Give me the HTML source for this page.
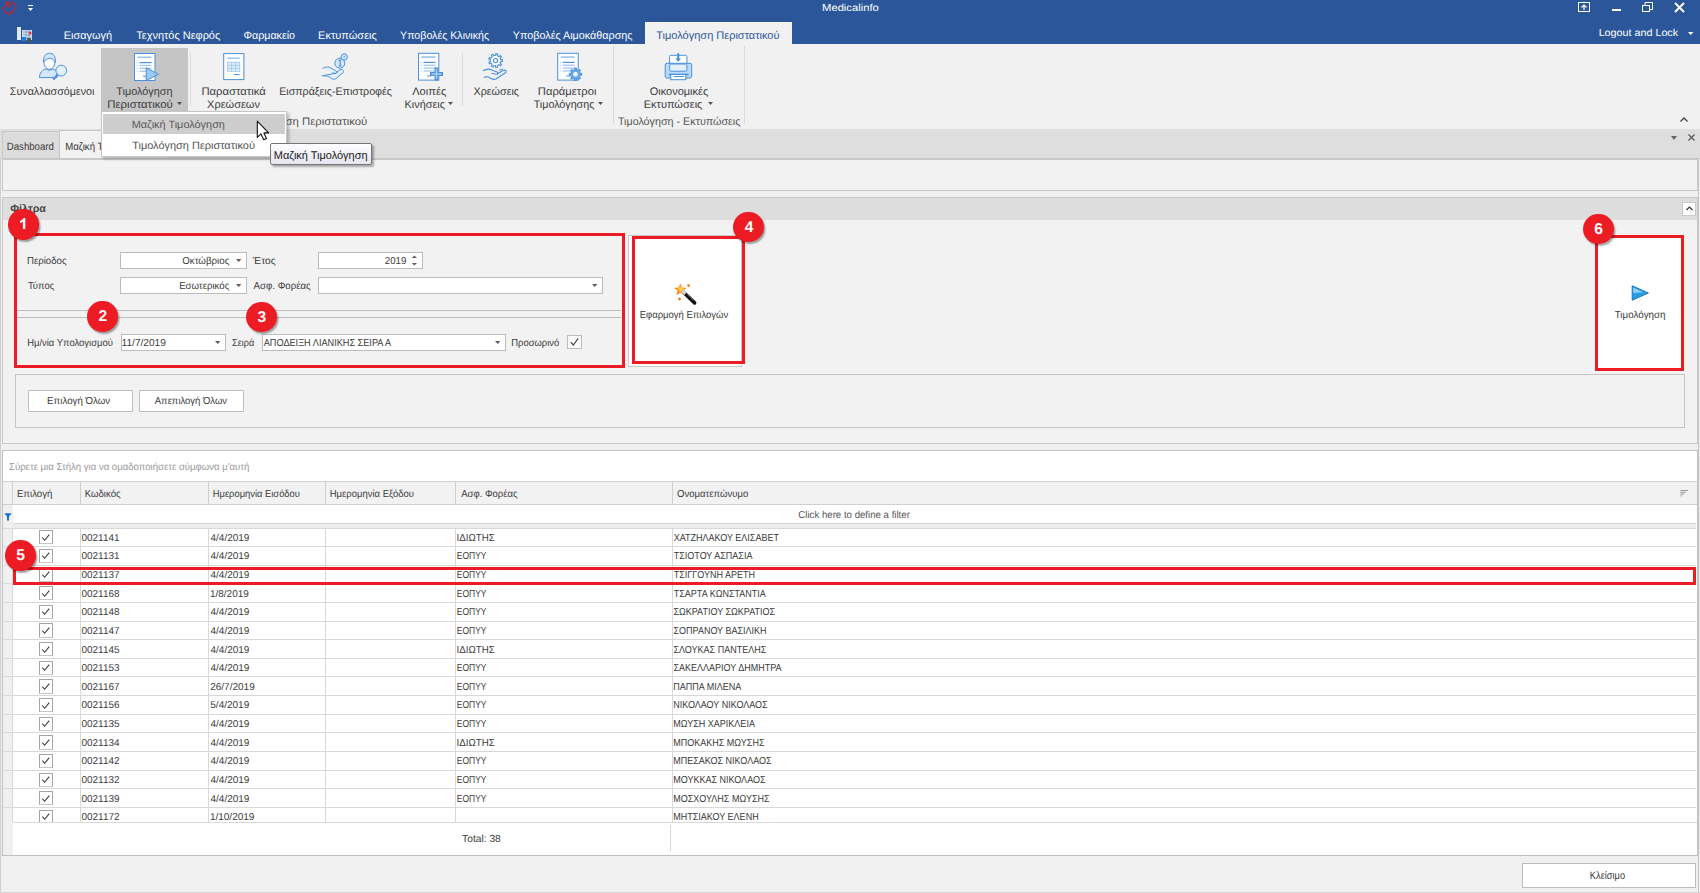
<!DOCTYPE html>
<html><head><meta charset="utf-8"><style>
html,body{margin:0;padding:0;width:1700px;height:893px;overflow:hidden;background:#f0f0f0}
body{position:relative;font-family:"Liberation Sans",sans-serif}
.t{position:absolute;white-space:nowrap}
.s{position:absolute;left:0;top:0;overflow:visible;font-family:"Liberation Sans",sans-serif;text-rendering:geometricPrecision;white-space:pre}
.r{position:absolute}
.badge{position:absolute;border-radius:50%;background:#ed1c24;color:#fff;font-weight:bold;text-align:center;box-shadow:1.5px 2px 1.5px rgba(0,0,0,0.35);font-family:"Liberation Sans",sans-serif}
</style></head><body>
<div class="r" style="left:0px;top:0px;width:1700px;height:44px;background:#2b579a"></div>
<svg class="s" width="1" height="1"><path d="M8.6 6.2 C6.5 5.2 3.6 5.8 3.4 8.2 C3.3 10.6 6.2 12.8 9.6 14.6 C12.8 11.8 15.4 8.6 15.8 5.6 C16.1 3.2 13.8 2.2 11.8 3.4 C10.4 4.4 9.4 6.2 9 7.6" fill="none" stroke="#c8242b" stroke-width="1.1"/><ellipse cx="7.6" cy="3.1" rx="1.9" ry="2.1" fill="#c8242b"/><circle cx="11.3" cy="12" r="1.1" fill="#c8242b"/></svg>
<svg class="r" style="left:27px;top:4px" width="8" height="8" viewBox="0 0 8 8"><rect x="1" y="1" width="5" height="1" fill="#fff"/><path d="M1 4 L6 4 L3.5 7Z" fill="#fff"/></svg>
<svg class="s" width="1" height="1"><text transform="translate(822.10,11.10) scale(1.1054,1)" font-size="10.145" fill="#fff">Medicalinfo</text></svg>
<svg class="r" style="left:1578px;top:2px" width="13" height="11" viewBox="0 0 13 11"><rect x="0.5" y="0.5" width="11" height="9" fill="none" stroke="#fff" stroke-width="1"/><path d="M6 8 L6 3 M3.5 5.5 L6 3 L8.5 5.5" stroke="#fff" stroke-width="1.2" fill="none"/></svg>
<div class="r" style="left:1612px;top:9px;width:9px;height:2px;background:#fff"></div>
<svg class="r" style="left:1642px;top:2px" width="11" height="11" viewBox="0 0 11 11"><rect x="0.5" y="3.5" width="7" height="6" fill="none" stroke="#fff"/><path d="M3 3.5 V0.5 H10.5 V7.5 H7.5" fill="none" stroke="#fff"/></svg>
<svg class="r" style="left:1674px;top:2px" width="11" height="11" viewBox="0 0 11 11"><path d="M1 1 L10 10 M10 1 L1 10" stroke="#fff" stroke-width="1.9"/></svg>
<div class="r" style="left:644.5px;top:22px;width:147.3px;height:22px;background:#f1f1f1"></div>
<svg class="r" style="left:16px;top:26px" width="17" height="17" viewBox="0 0 17 17"><rect x="1" y="1" width="4" height="13" fill="#dfe8f5"/><rect x="6" y="4" width="10" height="10" fill="#cfdcef"/><path d="M7 6h8M7 9h8M7 12h8M10 4v10M13 4v10" stroke="#7f9bc8" stroke-width="0.8"/><rect x="6" y="11" width="4" height="4" fill="#1e7fd8"/><rect x="11" y="12" width="4" height="4" fill="#555"/><circle cx="14" cy="7" r="1.5" fill="#e33"/></svg>
<svg class="s" width="1" height="1"><text transform="translate(63.83,38.80) scale(0.9906,1)" font-size="11.014" fill="#fff">Εισαγωγή</text></svg>
<svg class="s" width="1" height="1"><text transform="translate(136.28,38.80) scale(0.9962,1)" font-size="11.014" fill="#fff">Τεχνητός Νεφρός</text></svg>
<svg class="s" width="1" height="1"><text transform="translate(243.46,38.80) scale(0.9712,1)" font-size="11.014" fill="#fff">Φαρμακείο</text></svg>
<svg class="s" width="1" height="1"><text transform="translate(318.12,38.80)" font-size="11.014" fill="#fff">Εκτυπώσεις</text></svg>
<svg class="s" width="1" height="1"><text transform="translate(400.09,38.80) scale(0.9669,1)" font-size="11.014" fill="#fff">Υποβολές Κλινικής</text></svg>
<svg class="s" width="1" height="1"><text transform="translate(512.78,38.80) scale(0.9801,1)" font-size="11.014" fill="#fff">Υποβολές Αιμοκάθαρσης</text></svg>
<svg class="s" width="1" height="1"><text transform="translate(656.28,38.80)" font-size="11.014" fill="#2b579a">Τιμολόγηση Περιστατικού</text></svg>
<svg class="s" width="1" height="1"><text transform="translate(1598.64,36.20) scale(1.0612,1)" font-size="10.145" fill="#fff">Logout and Lock</text></svg>
<svg class="r" style="left:1687.5px;top:32px" width="6" height="4" viewBox="0 0 6 4"><path d="M0 0 H5.5 L2.75 3Z" fill="#fff"/></svg>
<div class="r" style="left:0px;top:44px;width:1700px;height:85px;background:#f1f1f1"></div>
<div class="r" style="left:101px;top:48px;width:86.6px;height:63px;background:#c5c5c5"></div>
<div class="r" style="left:190px;top:52.5px;width:1px;height:53px;background:#dadada"></div>
<div class="r" style="left:462px;top:52.5px;width:1px;height:53px;background:#dadada"></div>
<div class="r" style="left:613px;top:46px;width:1px;height:77.5px;background:#dadada"></div>
<div class="r" style="left:744px;top:46px;width:1px;height:77.5px;background:#dadada"></div>
<svg class="s" width="1" height="1"><text transform="translate(9.81,94.50) scale(0.9736,1)" font-size="11.014" fill="#3b3b3b">Συναλλασσόμενοι</text></svg>
<svg class="s" width="1" height="1"><text transform="translate(116.28,94.50) scale(0.9864,1)" font-size="11.014" fill="#3b3b3b">Τιμολόγηση</text></svg>
<svg class="s" width="1" height="1"><text transform="translate(107.29,107.50) scale(1.0371,1)" font-size="11.014" fill="#3b3b3b">Περιστατικού</text></svg>
<svg class="s" width="1" height="1"><text transform="translate(201.40,94.50) scale(1.0262,1)" font-size="11.014" fill="#3b3b3b">Παραστατικά</text></svg>
<svg class="s" width="1" height="1"><text transform="translate(207.07,107.50)" font-size="11.014" fill="#3b3b3b">Χρεώσεων</text></svg>
<svg class="s" width="1" height="1"><text transform="translate(279.14,94.50) scale(0.9704,1)" font-size="11.014" fill="#3b3b3b">Εισπράξεις-Επιστροφές</text></svg>
<svg class="s" width="1" height="1"><text transform="translate(412.19,94.50) scale(1.0101,1)" font-size="11.014" fill="#3b3b3b">Λοιπές</text></svg>
<svg class="s" width="1" height="1"><text transform="translate(404.53,107.50) scale(0.9886,1)" font-size="11.014" fill="#3b3b3b">Κινήσεις</text></svg>
<svg class="s" width="1" height="1"><text transform="translate(473.48,94.50) scale(0.9797,1)" font-size="11.014" fill="#3b3b3b">Χρεώσεις</text></svg>
<svg class="s" width="1" height="1"><text transform="translate(537.80,94.50) scale(1.0218,1)" font-size="11.014" fill="#3b3b3b">Παράμετροι</text></svg>
<svg class="s" width="1" height="1"><text transform="translate(533.69,107.50) scale(0.9742,1)" font-size="11.014" fill="#3b3b3b">Τιμολόγησης</text></svg>
<svg class="s" width="1" height="1"><text transform="translate(649.65,94.50)" font-size="11.014" fill="#3b3b3b">Οικονομικές</text></svg>
<svg class="s" width="1" height="1"><text transform="translate(643.72,107.50)" font-size="11.014" fill="#3b3b3b">Εκτυπώσεις</text></svg>
<svg class="s" width="1" height="1"><text transform="translate(617.88,124.60) scale(0.9897,1)" font-size="10.870" fill="#555">Τιμολόγηση - Εκτυπώσεις</text></svg>
<svg class="s" width="1" height="1"><text transform="translate(240.02,124.60) scale(1.0460,1)" font-size="10.870" fill="#555">Τιμολόγηση Περιστατικού</text></svg>
<svg class="r" style="left:176.5px;top:102.2px" width="5" height="3" viewBox="0 0 5 3"><path d="M0 0 H5 L2.5 3Z" fill="#555"/></svg>
<svg class="r" style="left:448px;top:102px" width="5" height="3" viewBox="0 0 5 3"><path d="M0 0 H5 L2.5 3Z" fill="#555"/></svg>
<svg class="r" style="left:598px;top:102px" width="5" height="3" viewBox="0 0 5 3"><path d="M0 0 H5 L2.5 3Z" fill="#555"/></svg>
<svg class="r" style="left:708.4px;top:102.3px" width="5" height="3" viewBox="0 0 5 3"><path d="M0 0 H5 L2.5 3Z" fill="#555"/></svg>
<svg class="s" width="1" height="1"><path d="M39.5 77.6 C39.5 72.5 42.5 69.8 46.2 69 Q49.4 72 52.6 69 C54.5 69.4 56 70.2 57 71.2 L57 77.6Z" fill="#d4e7fa" stroke="#4a90da" stroke-width="1"/><ellipse cx="49.4" cy="62" rx="5.6" ry="7.3" fill="#fff" stroke="#4a90da" stroke-width="1"/><path d="M43.8 62 C43 56 46 53.3 49.5 53.3 C53.5 53.3 56 56 55.2 62.5 C54 59.5 52 58.5 49.5 58.2 C47 58.8 45 60 43.8 62Z" fill="#d4e7fa" stroke="#4a90da" stroke-width="1"/><circle cx="61.3" cy="70.6" r="5.4" fill="#e3effb" stroke="#4a90da" stroke-width="1"/><path d="M57.6 74.6 L53.3 79.6" stroke="#4a90da" stroke-width="2.2"/></svg>
<svg class="s" width="1" height="1"><rect x="134.5" y="53.5" width="20.5" height="27" fill="#fff" stroke="#4a90da" stroke-width="1"/><path d="M137.5 57.3H151.5" stroke="#9cc3ec" stroke-width="1.6"/><path d="M139.5 62.6H151.5" stroke="#4a90da" stroke-width="1.2"/><rect x="136.6" y="62.1" width="1" height="1" fill="#9cc3ec"/><path d="M139.5 65.4H151.5" stroke="#9cc3ec" stroke-width="1.2"/><rect x="136.6" y="64.9" width="1" height="1" fill="#9cc3ec"/><path d="M139.5 68.3H151.5" stroke="#9cc3ec" stroke-width="1.2"/><rect x="136.6" y="67.8" width="1" height="1" fill="#9cc3ec"/><path d="M139.5 71.2H151.5" stroke="#9cc3ec" stroke-width="1.2"/><rect x="136.6" y="70.7" width="1" height="1" fill="#9cc3ec"/><path d="M143 76.2H147" stroke="#4a90da" stroke-width="1"/><path d="M146.2 67.8 L158.3 74.2 L146.2 80.6Z" fill="#9ccaf3" stroke="#4a90da" stroke-width="1"/></svg>
<svg class="s" width="1" height="1"><rect x="223.7" y="53.6" width="20.2" height="26" fill="#fff" stroke="#4a90da"/><path d="M227.5 58.2H239.8" stroke="#9cc3ec" stroke-width="1.5"/><rect x="227.5" y="62.3" width="12.3" height="9" fill="#e3effb" stroke="#9cc3ec" stroke-width="0.8"/><path d="M227.5 65.3H239.8M227.5 68.3H239.8M231.6 62.3V71.3M235.7 62.3V71.3" stroke="#9cc3ec" stroke-width="0.8"/><path d="M234 74.6H239.6" stroke="#4a90da" stroke-width="1"/></svg>
<svg class="s" width="1" height="1"><path d="M322.5 68.4 C325 67 327.5 66.5 330 67.5 L336 71 C337.5 72 337 73.8 335 73.5 L332 72.8 M335.5 73.2 L340 69.8 C342 69 343.5 70 343.5 71.5 C343.5 72.5 342.8 73 342 73.5 L336 78.5 C334.5 79.5 333 79.5 331.5 78.5 C329 76.5 326 75.5 322.5 75.8Z" fill="#e3effb" stroke="#4a90da" stroke-width="1"/><circle cx="339.8" cy="63.2" r="5" fill="#d4e7fa" stroke="#4a90da" stroke-width="1"/><path d="M338.8 61 L340.2 60 V66 M338.6 66H341.6" stroke="#4a90da" stroke-width="1.1" fill="none"/><circle cx="344.2" cy="57" r="3.2" fill="#d4e7fa" stroke="#4a90da" stroke-width="1"/><path d="M344.2 55.7V58.2" stroke="#4a90da" stroke-width="0.8"/></svg>
<svg class="s" width="1" height="1"><rect x="418.5" y="53.3" width="20.3" height="26.8" fill="#fff" stroke="#4a90da" stroke-width="1"/><path d="M421.5 57.099999999999994H435.5" stroke="#9cc3ec" stroke-width="1.6"/><path d="M423.5 62.4H435.5" stroke="#4a90da" stroke-width="1.2"/><rect x="420.6" y="61.9" width="1" height="1" fill="#9cc3ec"/><path d="M423.5 65.2H435.5" stroke="#9cc3ec" stroke-width="1.2"/><rect x="420.6" y="64.7" width="1" height="1" fill="#9cc3ec"/><path d="M423.5 68.1H435.5" stroke="#9cc3ec" stroke-width="1.2"/><rect x="420.6" y="67.6" width="1" height="1" fill="#9cc3ec"/><path d="M423.5 71.0H435.5" stroke="#9cc3ec" stroke-width="1.2"/><rect x="420.6" y="70.5" width="1" height="1" fill="#9cc3ec"/><path d="M427 76.0H431" stroke="#4a90da" stroke-width="1"/><path d="M436.5 67.5V80.5M430 74H443" stroke="#4a90da" stroke-width="4"/><path d="M436.5 69V79M431.5 74H441.5" stroke="#a6cff3" stroke-width="1.6"/></svg>
<svg class="s" width="1" height="1"><path d="M500.72,59.70 L502.44,59.68 L502.44,61.52 L500.72,61.50 L500.10,63.20 L501.43,64.29 L500.24,65.70 L498.94,64.58 L497.38,65.49 L497.70,67.17 L495.88,67.49 L495.60,65.80 L493.82,65.49 L492.98,66.98 L491.38,66.06 L492.26,64.58 L491.10,63.20 L489.49,63.81 L488.86,62.07 L490.48,61.50 L490.48,59.70 L488.86,59.13 L489.49,57.39 L491.10,58.00 L492.26,56.62 L491.38,55.14 L492.98,54.22 L493.82,55.71 L495.60,55.40 L495.88,53.71 L497.70,54.03 L497.38,55.71 L498.94,56.62 L500.24,55.50 L501.43,56.91 L500.10,58.00Z" fill="#fff" stroke="#4a90da" stroke-width="1.1"/><circle cx="495.6" cy="60.6" r="2.1" fill="#fff" stroke="#4a90da" stroke-width="1.1"/><path d="M483 70.8 C486 69 489 68.5 492 70 L497 72 C498.5 72.8 498 74.5 496.5 74.3 L491.5 73.3 M496.8 74.2 L503 70.5 C505 69.5 507 71 505.8 72.5 L496 79 C493 80.5 491 78 488 77 C486.5 76.5 485 76.8 484 77.5" fill="none" stroke="#4a90da" stroke-width="1.1"/><path d="M499 70.3 L503 68.8" stroke="#4a90da" stroke-width="1"/></svg>
<svg class="s" width="1" height="1"><rect x="557.7" y="53.3" width="20.5" height="26.8" fill="#fff" stroke="#4a90da" stroke-width="1"/><path d="M560.7 57.099999999999994H574.7" stroke="#9cc3ec" stroke-width="1.6"/><path d="M562.7 62.4H574.7" stroke="#4a90da" stroke-width="1.2"/><rect x="559.8000000000001" y="61.9" width="1" height="1" fill="#9cc3ec"/><path d="M562.7 65.2H574.7" stroke="#9cc3ec" stroke-width="1.2"/><rect x="559.8000000000001" y="64.7" width="1" height="1" fill="#9cc3ec"/><path d="M562.7 68.1H574.7" stroke="#9cc3ec" stroke-width="1.2"/><rect x="559.8000000000001" y="67.6" width="1" height="1" fill="#9cc3ec"/><path d="M562.7 71.0H574.7" stroke="#9cc3ec" stroke-width="1.2"/><rect x="559.8000000000001" y="70.5" width="1" height="1" fill="#9cc3ec"/><path d="M566.2 76.0H570.2" stroke="#4a90da" stroke-width="1"/><path d="M579.99,73.31 L581.71,73.26 L581.71,75.34 L579.99,75.29 L579.37,76.78 L580.63,77.96 L579.16,79.43 L577.98,78.17 L576.49,78.79 L576.54,80.51 L574.46,80.51 L574.51,78.79 L573.02,78.17 L571.84,79.43 L570.37,77.96 L571.63,76.78 L571.01,75.29 L569.29,75.34 L569.29,73.26 L571.01,73.31 L571.63,71.82 L570.37,70.64 L571.84,69.17 L573.02,70.43 L574.51,69.81 L574.46,68.09 L576.54,68.09 L576.49,69.81 L577.98,70.43 L579.16,69.17 L580.63,70.64 L579.37,71.82Z" fill="#6aaae6" stroke="#4a90da" stroke-width="1"/><circle cx="575.5" cy="74.3" r="2.2" fill="#fff"/></svg>
<svg class="s" width="1" height="1"><rect x="669.6" y="55.3" width="17.3" height="15.8" rx="1.2" fill="#fff" stroke="#4a90da" stroke-width="1"/><path d="M678.2 53.3V60.5" stroke="#4a90da" stroke-width="2.2"/><path d="M675.3 58.5 L678.2 61.8 L681.1 58.5Z" fill="#4a90da"/><path d="M667 63.3 H690.2 Q691.7 63.3 691.7 65 V76.2 Q691.7 78 690 78 H666.8 Q665.2 78 665.2 76.2 V65 Q665.2 63.3 667 63.3Z" fill="#b9dbfb" stroke="#4a90da" stroke-width="1"/><rect x="669.6" y="64" width="17.3" height="7.2" rx="1.5" fill="#e3f0fc" stroke="#4a90da" stroke-width="1"/><path d="M668.6 74.5H688.6" stroke="#4a90da" stroke-width="1.6"/><rect x="670.8" y="74.5" width="15" height="5.2" fill="#fff" stroke="#4a90da" stroke-width="1"/><path d="M673.5 76.5H684" stroke="#4a90da" stroke-width="1"/></svg>
<svg class="r" style="left:1680px;top:117px" width="8" height="5" viewBox="0 0 8 5"><path d="M0.5 4.5 L4 1 L7.5 4.5" stroke="#444" stroke-width="1.3" fill="none"/></svg>
<div class="r" style="left:0px;top:129px;width:1700px;height:29px;background:#dedede"></div>
<div class="r" style="left:2px;top:131.2px;width:58px;height:26.5px;background:#dcdcdc;border:1px solid #c8c8c8;border-bottom:none;box-sizing:border-box"></div>
<svg class="s" width="1" height="1"><text transform="translate(6.83,149.80) scale(0.9074,1)" font-size="10.580" fill="#3a3a3a">Dashboard</text></svg>
<div class="r" style="left:60px;top:130.4px;width:110px;height:27.6px;background:#f2f2f2;border:1px solid #c8c8c8;border-bottom:none;border-left:none;box-sizing:border-box"></div>
<svg class="s" width="1" height="1"><text transform="translate(65.13,149.80) scale(0.9074,1)" font-size="10.580" fill="#333">Μαζική Τιμολόγηση</text></svg>
<svg class="r" style="left:1670.5px;top:135.5px" width="6" height="5" viewBox="0 0 6 5"><path d="M0 0 H6 L3 4Z" fill="#666"/></svg>
<svg class="r" style="left:1687.5px;top:133.5px" width="7" height="7" viewBox="0 0 7 7"><path d="M0.5 0.5 L6.5 6.5 M6.5 0.5 L0.5 6.5" stroke="#555" stroke-width="1.2"/></svg>
<div class="r" style="left:0px;top:157.5px;width:1700px;height:735.5px;background:#f0f0f0"></div>
<div class="r" style="left:0px;top:157.5px;width:1700px;height:1px;background:#c8c8c8"></div>
<div class="r" style="left:0px;top:158px;width:1.3px;height:735px;background:#cfcfcf"></div>
<div class="r" style="left:1698px;top:158px;width:1px;height:735px;background:#c4c4c4"></div>
<div class="r" style="left:0px;top:892px;width:1700px;height:1px;background:#d8d8d8"></div>
<div class="r" style="left:2px;top:159px;width:1695.5px;height:31.8px;background:#f2f2f2;border:1px solid #c9c9c9;box-sizing:border-box"></div>
<div class="r" style="left:2px;top:197px;width:1695.5px;height:246.5px;background:#f2f2f2;border:1px solid #c9c9c9;box-sizing:border-box"></div>
<div class="r" style="left:3px;top:198px;width:1693.5px;height:22px;background:#dddddd"></div>
<svg class="s" width="1" height="1"><text transform="translate(10.18,212.30)" font-size="10.729" fill="#474747" font-weight="bold">Φίλτρα</text></svg>
<div class="r" style="left:1682px;top:202px;width:14px;height:13.7px;background:#fff;border:1px solid #c9c9c9;box-sizing:border-box"></div>
<svg class="r" style="left:1686px;top:206px" width="7" height="5" viewBox="0 0 7 5"><path d="M0.5 4 L3.5 1 L6.5 4" stroke="#333" stroke-width="1.2" fill="none"/></svg>
<svg class="s" width="1" height="1"><text transform="translate(27.03,263.80) scale(0.9487,1)" font-size="10.145" fill="#3c3c3c">Περίοδος</text></svg>
<svg class="s" width="1" height="1"><text transform="translate(27.91,288.80) scale(0.9352,1)" font-size="10.145" fill="#3c3c3c">Τύπος</text></svg>
<div class="r" style="left:120.4px;top:252.4px;width:126.4px;height:16.5px;background:#fff;border:1px solid #bcbcbc;box-sizing:border-box"></div>
<svg class="r" style="left:235.8px;top:259.45px" width="6" height="4" viewBox="0 0 6 4"><path d="M0 0 H5.4 L2.7 3Z" fill="#5e5e5e"/></svg>
<svg class="s" width="1" height="1"><text transform="translate(182.21,264.30) scale(0.9609,1)" font-size="10.145" fill="#3c3c3c">Οκτώβριος</text></svg>
<div class="r" style="left:120.4px;top:277.3px;width:126.4px;height:16.5px;background:#fff;border:1px solid #bcbcbc;box-sizing:border-box"></div>
<svg class="r" style="left:235.8px;top:284.35px" width="6" height="4" viewBox="0 0 6 4"><path d="M0 0 H5.4 L2.7 3Z" fill="#5e5e5e"/></svg>
<svg class="s" width="1" height="1"><text transform="translate(179.13,289.30) scale(0.9509,1)" font-size="10.145" fill="#3c3c3c">Εσωτερικός</text></svg>
<svg class="s" width="1" height="1"><text transform="translate(253.10,264.30) scale(1.0128,1)" font-size="10.145" fill="#3c3c3c">Έτος</text></svg>
<svg class="s" width="1" height="1"><text transform="translate(253.60,289.30) scale(0.9539,1)" font-size="10.145" fill="#3c3c3c">Ασφ. Φορέας</text></svg>
<div class="r" style="left:318px;top:252.4px;width:105px;height:16.5px;background:#fff;border:1px solid #bcbcbc;box-sizing:border-box"></div>
<svg class="s" width="1" height="1"><text transform="translate(384.81,263.90) scale(0.9579,1)" font-size="10.145" fill="#3c3c3c">2019</text></svg>
<svg class="s" width="1" height="1"><path d="M411.8 257.9 L414.4 255.4 L417 257.9Z" fill="#5e5e5e"/><path d="M411.8 262.9 L417 262.9 L414.4 265.6Z" fill="#5e5e5e"/></svg>
<div class="r" style="left:318px;top:277.3px;width:284.7px;height:16.5px;background:#fff;border:1px solid #bcbcbc;box-sizing:border-box"></div>
<svg class="r" style="left:591.7px;top:284.35px" width="6" height="4" viewBox="0 0 6 4"><path d="M0 0 H5.4 L2.7 3Z" fill="#5e5e5e"/></svg>
<div class="r" style="left:17px;top:310px;width:604px;height:1px;background:#bdbdbd"></div>
<div class="r" style="left:17px;top:317.3px;width:604px;height:1px;background:#bdbdbd"></div>
<svg class="s" width="1" height="1"><text transform="translate(27.14,345.80) scale(0.9328,1)" font-size="10.145" fill="#3c3c3c">Ημ/νία Υπολογισμού</text></svg>
<div class="r" style="left:120.5px;top:334px;width:105px;height:16.5px;background:#fff;border:1px solid #bcbcbc;box-sizing:border-box"></div>
<svg class="r" style="left:214.5px;top:341.05px" width="6" height="4" viewBox="0 0 6 4"><path d="M0 0 H5.4 L2.7 3Z" fill="#5e5e5e"/></svg>
<svg class="s" width="1" height="1"><text transform="translate(121.59,345.80)" font-size="10.145" fill="#3c3c3c">11/7/2019</text></svg>
<svg class="s" width="1" height="1"><text transform="translate(232.04,345.80) scale(0.8980,1)" font-size="10.145" fill="#3c3c3c">Σειρά</text></svg>
<div class="r" style="left:262.2px;top:334.2px;width:243.6px;height:16.5px;background:#fff;border:1px solid #bcbcbc;box-sizing:border-box"></div>
<svg class="r" style="left:494.79999999999995px;top:341.25px" width="6" height="4" viewBox="0 0 6 4"><path d="M0 0 H5.4 L2.7 3Z" fill="#5e5e5e"/></svg>
<svg class="s" width="1" height="1"><text transform="translate(263.75,345.60) scale(0.9042,1)" font-size="10.145" fill="#3c3c3c">ΑΠΟΔΕΙΞΗ ΛΙΑΝΙΚΗΣ ΣΕΙΡΑ Α</text></svg>
<svg class="s" width="1" height="1"><text transform="translate(511.24,345.80) scale(0.9303,1)" font-size="10.145" fill="#3c3c3c">Προσωρινό</text></svg>
<div class="r" style="left:567.4px;top:334.6px;width:14.2px;height:14.6px;background:#fbfbfb;border:1px solid #bcbcbc;box-sizing:border-box"></div>
<svg class="s" width="1" height="1"><path d="M570.8 342.2 L573.3 345 L578.2 338.4" stroke="#404040" fill="none" stroke-width="1.15"/></svg>
<div class="r" style="left:628px;top:235.4px;width:114px;height:131.6px;background:#fff;border:1px solid #c9c9c9;box-sizing:border-box"></div>
<svg class="s" width="1" height="1"><text transform="translate(639.74,318.00) scale(0.9365,1)" font-size="10.145" fill="#3c3c3c">Εφαρμογή Επιλογών</text></svg>
<svg class="s" width="1" height="1"><defs><radialGradient id="sg" cx="0.55" cy="0.45" r="0.6"><stop offset="0" stop-color="#ffe45c"/><stop offset="0.5" stop-color="#f9a31a"/><stop offset="1" stop-color="#ee5f10"/></radialGradient></defs><path d="M683.6 292.3 L694.6 302.9" stroke="#111" stroke-width="3.6" stroke-linecap="round"/><path d="M683.8 291.2 L694 301" stroke="#e8e8e8" stroke-width="0.7" stroke-dasharray="1 1"/><path d="M680.30,284.00 L681.83,287.80 L685.91,288.08 L682.77,290.70 L683.77,294.67 L680.30,292.50 L676.83,294.67 L677.83,290.70 L674.69,288.08 L678.77,287.80Z" fill="url(#sg)" stroke="#f07014" stroke-width="0.4"/><path d="M682.4 290.8 L685.4 293.8" stroke="#c9d4de" stroke-width="3.4"/><circle cx="688.6" cy="285.6" r="1.4" fill="#f07a1c"/><circle cx="679.5" cy="299" r="1.4" fill="#f07a1c"/></svg>
<div class="r" style="left:1596px;top:236px;width:87px;height:134px;background:#fff"></div>
<svg class="s" width="1" height="1"><path d="M1632.2 285.8 L1648.4 293 L1632.2 300.2Z" fill="#2a9ce0" stroke="#1a78c4" stroke-width="1"/><path d="M1633.2 287.6 L1643 292.2 L1633.2 293Z" fill="#8fd0f5"/></svg>
<svg class="s" width="1" height="1"><text transform="translate(1614.70,318.00) scale(0.9702,1)" font-size="10.145" fill="#3c3c3c">Τιμολόγηση</text></svg>
<div class="r" style="left:15.3px;top:374px;width:1669.7px;height:53.7px;background:#f2f2f2;border:1px solid #c6c6c6;box-sizing:border-box"></div>
<div class="r" style="left:28.3px;top:389.9px;width:104.5px;height:21.7px;background:#fff;border:1px solid #c0c0c0;box-sizing:border-box"></div>
<svg class="s" width="1" height="1"><text transform="translate(47.12,403.90) scale(0.9579,1)" font-size="10.145" fill="#3c3c3c">Επιλογή Όλων</text></svg>
<div class="r" style="left:139.2px;top:389.9px;width:105.1px;height:21.7px;background:#fff;border:1px solid #c0c0c0;box-sizing:border-box"></div>
<svg class="s" width="1" height="1"><text transform="translate(154.80,403.90) scale(0.9351,1)" font-size="10.145" fill="#3c3c3c">Απεπιλογή Όλων</text></svg>
<div class="r" style="left:2px;top:450.3px;width:1695.5px;height:405.5px;background:#fff;border:1px solid #c0c0c0;box-sizing:border-box"></div>
<svg class="s" width="1" height="1"><text transform="translate(9.02,470.20) scale(0.9455,1)" font-size="10.145" fill="#999999">Σύρετε μια Στήλη για να ομαδοποιήσετε σύμφωνα μ'αυτή</text></svg>
<div class="r" style="left:3px;top:481.5px;width:9.5px;height:373.5px;background:#f0f0f0"></div>
<div class="r" style="left:3px;top:481.3px;width:1693.5px;height:23.4px;background:#f2f2f2;border-top:1px solid #d0d0d0;border-bottom:1px solid #d0d0d0;box-sizing:border-box"></div>
<div class="r" style="left:12px;top:481.5px;width:1px;height:23px;background:#d0d0d0"></div>
<div class="r" style="left:80px;top:481.5px;width:1px;height:23px;background:#d0d0d0"></div>
<div class="r" style="left:208px;top:481.5px;width:1px;height:23px;background:#d0d0d0"></div>
<div class="r" style="left:325px;top:481.5px;width:1px;height:23px;background:#d0d0d0"></div>
<div class="r" style="left:455px;top:481.5px;width:1px;height:23px;background:#d0d0d0"></div>
<div class="r" style="left:672px;top:481.5px;width:1px;height:23px;background:#d0d0d0"></div>
<svg class="s" width="1" height="1"><text transform="translate(16.93,497.40) scale(0.9522,1)" font-size="10.145" fill="#3c3c3c">Επιλογή</text></svg>
<svg class="s" width="1" height="1"><text transform="translate(84.63,497.40) scale(0.9504,1)" font-size="10.145" fill="#3c3c3c">Κωδικός</text></svg>
<svg class="s" width="1" height="1"><text transform="translate(212.75,497.40) scale(0.9256,1)" font-size="10.145" fill="#3c3c3c">Ημερομηνία Εισόδου</text></svg>
<svg class="s" width="1" height="1"><text transform="translate(329.74,497.40) scale(0.9373,1)" font-size="10.145" fill="#3c3c3c">Ημερομηνία Εξόδου</text></svg>
<svg class="s" width="1" height="1"><text transform="translate(461.25,497.40) scale(0.9414,1)" font-size="10.145" fill="#3c3c3c">Ασφ. Φορέας</text></svg>
<svg class="s" width="1" height="1"><text transform="translate(677.12,497.40) scale(0.9403,1)" font-size="10.145" fill="#3c3c3c">Ονοματεπώνυμο</text></svg>
<svg class="s" width="1" height="1"><path d="M1680.5 490.5H1688M1680.5 492.3H1685.8M1680.5 494H1683.8M1680.5 495.8H1682" stroke="#9a9a9a" stroke-width="1"/></svg>
<div class="r" style="left:13.3px;top:504.7px;width:1683.2px;height:18.6px;background:#fff"></div>
<div class="r" style="left:3px;top:504.7px;width:9.3px;height:18.6px;background:#f0f0f0"></div>
<svg class="s" width="1" height="1"><text transform="translate(798.32,517.70) scale(0.9531,1)" font-size="10.145" fill="#555">Click here to define a filter</text></svg>
<svg class="r" style="left:4px;top:512.5px" width="8" height="8" viewBox="0 0 8 8"><path d="M0.3 0.3 H7.7 L5 3.6 V7.5 H3 V3.6Z" fill="#1f6fd1"/></svg>
<div class="r" style="left:13.3px;top:523px;width:1683.2px;height:5.5px;background:#ececec;border-top:1px solid #d9d9d9;border-bottom:1px solid #d9d9d9;box-sizing:border-box"></div>
<div class="r" style="left:3px;top:527.7px;width:9.3px;height:1px;background:#d9d9d9"></div>
<div class="r" style="left:3px;top:528.3px;width:1693.5px;height:293.70px;overflow:hidden">
<div class="r" style="left:0px;top:17.65px;width:9.3px;height:1px;background:#dcdcdc"></div>
<div class="r" style="left:9.3px;top:17.65px;width:1684px;height:1px;background:#d8d8d8"></div>
<div class="r" style="left:9px;top:0.00px;width:1px;height:18.65px;background:#d8d8d8"></div>
<div class="r" style="left:77px;top:0.00px;width:1px;height:18.65px;background:#d8d8d8"></div>
<div class="r" style="left:205px;top:0.00px;width:1px;height:18.65px;background:#d8d8d8"></div>
<div class="r" style="left:322px;top:0.00px;width:1px;height:18.65px;background:#d8d8d8"></div>
<div class="r" style="left:452px;top:0.00px;width:1px;height:18.65px;background:#d8d8d8"></div>
<div class="r" style="left:669px;top:0.00px;width:1px;height:18.65px;background:#d8d8d8"></div>
<div class="r" style="left:36.2px;top:1.80px;width:13.8px;height:14.3px;border:1px solid #a4a4a4;border-bottom-color:#c8c8c8;box-sizing:border-box;background:#fff"></div>
<svg class="r" style="left:39.2px;top:5.40px" width="8" height="8" viewBox="0 0 8 8"><path d="M0.3 3.6 L2.6 6.3 L7.3 0.6" stroke="#3a3a3a" fill="none" stroke-width="1.05"/></svg>
<svg class="s" width="1" height="1"><text transform="translate(78.50,12.60) scale(0.9950,1)" font-size="10.000" fill="#3c3c3c">0021141</text></svg>
<svg class="s" width="1" height="1"><text transform="translate(207.50,12.60)" font-size="10.000" fill="#3c3c3c">4/4/2019</text></svg>
<svg class="s" width="1" height="1"><text transform="translate(453.62,12.60) scale(0.9630,1)" font-size="10.145" fill="#3c3c3c">ΙΔΙΩΤΗΣ</text></svg>
<svg class="s" width="1" height="1"><text transform="translate(670.63,12.60) scale(0.8900,1)" font-size="10.145" fill="#3c3c3c">ΧΑΤΖΗΛΑΚΟΥ ΕΛΙΣΑΒΕΤ</text></svg>
<div class="r" style="left:0px;top:36.30px;width:9.3px;height:1px;background:#dcdcdc"></div>
<div class="r" style="left:9.3px;top:36.30px;width:1684px;height:1px;background:#d8d8d8"></div>
<div class="r" style="left:9px;top:18.65px;width:1px;height:18.65px;background:#d8d8d8"></div>
<div class="r" style="left:77px;top:18.65px;width:1px;height:18.65px;background:#d8d8d8"></div>
<div class="r" style="left:205px;top:18.65px;width:1px;height:18.65px;background:#d8d8d8"></div>
<div class="r" style="left:322px;top:18.65px;width:1px;height:18.65px;background:#d8d8d8"></div>
<div class="r" style="left:452px;top:18.65px;width:1px;height:18.65px;background:#d8d8d8"></div>
<div class="r" style="left:669px;top:18.65px;width:1px;height:18.65px;background:#d8d8d8"></div>
<div class="r" style="left:36.2px;top:20.45px;width:13.8px;height:14.3px;border:1px solid #a4a4a4;border-bottom-color:#c8c8c8;box-sizing:border-box;background:#fff"></div>
<svg class="r" style="left:39.2px;top:24.05px" width="8" height="8" viewBox="0 0 8 8"><path d="M0.3 3.6 L2.6 6.3 L7.3 0.6" stroke="#3a3a3a" fill="none" stroke-width="1.05"/></svg>
<svg class="s" width="1" height="1"><text transform="translate(78.50,31.25) scale(0.9950,1)" font-size="10.000" fill="#3c3c3c">0021131</text></svg>
<svg class="s" width="1" height="1"><text transform="translate(207.50,31.25)" font-size="10.000" fill="#3c3c3c">4/4/2019</text></svg>
<svg class="s" width="1" height="1"><text transform="translate(453.82,31.25) scale(0.8360,1)" font-size="10.145" fill="#3c3c3c">ΕΟΠΥΥ</text></svg>
<svg class="s" width="1" height="1"><text transform="translate(670.72,31.25) scale(0.8900,1)" font-size="10.145" fill="#3c3c3c">ΤΣΙΟΤΟΥ ΑΣΠΑΣΙΑ</text></svg>
<div class="r" style="left:0px;top:54.95px;width:9.3px;height:1px;background:#dcdcdc"></div>
<div class="r" style="left:9.3px;top:54.95px;width:1684px;height:1px;background:#d8d8d8"></div>
<div class="r" style="left:9px;top:37.30px;width:1px;height:18.65px;background:#d8d8d8"></div>
<div class="r" style="left:77px;top:37.30px;width:1px;height:18.65px;background:#d8d8d8"></div>
<div class="r" style="left:205px;top:37.30px;width:1px;height:18.65px;background:#d8d8d8"></div>
<div class="r" style="left:322px;top:37.30px;width:1px;height:18.65px;background:#d8d8d8"></div>
<div class="r" style="left:452px;top:37.30px;width:1px;height:18.65px;background:#d8d8d8"></div>
<div class="r" style="left:669px;top:37.30px;width:1px;height:18.65px;background:#d8d8d8"></div>
<div class="r" style="left:36.2px;top:39.10px;width:13.8px;height:14.3px;border:1px solid #a4a4a4;border-bottom-color:#c8c8c8;box-sizing:border-box;background:#fff"></div>
<svg class="r" style="left:39.2px;top:42.70px" width="8" height="8" viewBox="0 0 8 8"><path d="M0.3 3.6 L2.6 6.3 L7.3 0.6" stroke="#3a3a3a" fill="none" stroke-width="1.05"/></svg>
<svg class="s" width="1" height="1"><text transform="translate(78.50,49.90) scale(0.9950,1)" font-size="10.000" fill="#3c3c3c">0021137</text></svg>
<svg class="s" width="1" height="1"><text transform="translate(207.50,49.90)" font-size="10.000" fill="#3c3c3c">4/4/2019</text></svg>
<svg class="s" width="1" height="1"><text transform="translate(453.82,49.90) scale(0.8360,1)" font-size="10.145" fill="#3c3c3c">ΕΟΠΥΥ</text></svg>
<svg class="s" width="1" height="1"><text transform="translate(670.72,49.90) scale(0.8900,1)" font-size="10.145" fill="#3c3c3c">ΤΣΙΓΓΟΥΝΗ ΑΡΕΤΗ</text></svg>
<div class="r" style="left:0px;top:73.60px;width:9.3px;height:1px;background:#dcdcdc"></div>
<div class="r" style="left:9.3px;top:73.60px;width:1684px;height:1px;background:#d8d8d8"></div>
<div class="r" style="left:9px;top:55.95px;width:1px;height:18.65px;background:#d8d8d8"></div>
<div class="r" style="left:77px;top:55.95px;width:1px;height:18.65px;background:#d8d8d8"></div>
<div class="r" style="left:205px;top:55.95px;width:1px;height:18.65px;background:#d8d8d8"></div>
<div class="r" style="left:322px;top:55.95px;width:1px;height:18.65px;background:#d8d8d8"></div>
<div class="r" style="left:452px;top:55.95px;width:1px;height:18.65px;background:#d8d8d8"></div>
<div class="r" style="left:669px;top:55.95px;width:1px;height:18.65px;background:#d8d8d8"></div>
<div class="r" style="left:36.2px;top:57.75px;width:13.8px;height:14.3px;border:1px solid #a4a4a4;border-bottom-color:#c8c8c8;box-sizing:border-box;background:#fff"></div>
<svg class="r" style="left:39.2px;top:61.35px" width="8" height="8" viewBox="0 0 8 8"><path d="M0.3 3.6 L2.6 6.3 L7.3 0.6" stroke="#3a3a3a" fill="none" stroke-width="1.05"/></svg>
<svg class="s" width="1" height="1"><text transform="translate(78.50,68.55) scale(0.9950,1)" font-size="10.000" fill="#3c3c3c">0021168</text></svg>
<svg class="s" width="1" height="1"><text transform="translate(206.90,68.55)" font-size="10.000" fill="#3c3c3c">1/8/2019</text></svg>
<svg class="s" width="1" height="1"><text transform="translate(453.82,68.55) scale(0.8360,1)" font-size="10.145" fill="#3c3c3c">ΕΟΠΥΥ</text></svg>
<svg class="s" width="1" height="1"><text transform="translate(670.72,68.55) scale(0.8900,1)" font-size="10.145" fill="#3c3c3c">ΤΣΑΡΤΑ ΚΩΝΣΤΑΝΤΙΑ</text></svg>
<div class="r" style="left:0px;top:92.25px;width:9.3px;height:1px;background:#dcdcdc"></div>
<div class="r" style="left:9.3px;top:92.25px;width:1684px;height:1px;background:#d8d8d8"></div>
<div class="r" style="left:9px;top:74.60px;width:1px;height:18.65px;background:#d8d8d8"></div>
<div class="r" style="left:77px;top:74.60px;width:1px;height:18.65px;background:#d8d8d8"></div>
<div class="r" style="left:205px;top:74.60px;width:1px;height:18.65px;background:#d8d8d8"></div>
<div class="r" style="left:322px;top:74.60px;width:1px;height:18.65px;background:#d8d8d8"></div>
<div class="r" style="left:452px;top:74.60px;width:1px;height:18.65px;background:#d8d8d8"></div>
<div class="r" style="left:669px;top:74.60px;width:1px;height:18.65px;background:#d8d8d8"></div>
<div class="r" style="left:36.2px;top:76.40px;width:13.8px;height:14.3px;border:1px solid #a4a4a4;border-bottom-color:#c8c8c8;box-sizing:border-box;background:#fff"></div>
<svg class="r" style="left:39.2px;top:80.00px" width="8" height="8" viewBox="0 0 8 8"><path d="M0.3 3.6 L2.6 6.3 L7.3 0.6" stroke="#3a3a3a" fill="none" stroke-width="1.05"/></svg>
<svg class="s" width="1" height="1"><text transform="translate(78.50,87.20) scale(0.9950,1)" font-size="10.000" fill="#3c3c3c">0021148</text></svg>
<svg class="s" width="1" height="1"><text transform="translate(207.50,87.20)" font-size="10.000" fill="#3c3c3c">4/4/2019</text></svg>
<svg class="s" width="1" height="1"><text transform="translate(453.82,87.20) scale(0.8360,1)" font-size="10.145" fill="#3c3c3c">ΕΟΠΥΥ</text></svg>
<svg class="s" width="1" height="1"><text transform="translate(670.45,87.20) scale(0.8900,1)" font-size="10.145" fill="#3c3c3c">ΣΩΚΡΑΤΙΟΥ ΣΩΚΡΑΤΙΟΣ</text></svg>
<div class="r" style="left:0px;top:110.90px;width:9.3px;height:1px;background:#dcdcdc"></div>
<div class="r" style="left:9.3px;top:110.90px;width:1684px;height:1px;background:#d8d8d8"></div>
<div class="r" style="left:9px;top:93.25px;width:1px;height:18.65px;background:#d8d8d8"></div>
<div class="r" style="left:77px;top:93.25px;width:1px;height:18.65px;background:#d8d8d8"></div>
<div class="r" style="left:205px;top:93.25px;width:1px;height:18.65px;background:#d8d8d8"></div>
<div class="r" style="left:322px;top:93.25px;width:1px;height:18.65px;background:#d8d8d8"></div>
<div class="r" style="left:452px;top:93.25px;width:1px;height:18.65px;background:#d8d8d8"></div>
<div class="r" style="left:669px;top:93.25px;width:1px;height:18.65px;background:#d8d8d8"></div>
<div class="r" style="left:36.2px;top:95.05px;width:13.8px;height:14.3px;border:1px solid #a4a4a4;border-bottom-color:#c8c8c8;box-sizing:border-box;background:#fff"></div>
<svg class="r" style="left:39.2px;top:98.65px" width="8" height="8" viewBox="0 0 8 8"><path d="M0.3 3.6 L2.6 6.3 L7.3 0.6" stroke="#3a3a3a" fill="none" stroke-width="1.05"/></svg>
<svg class="s" width="1" height="1"><text transform="translate(78.50,105.85) scale(0.9950,1)" font-size="10.000" fill="#3c3c3c">0021147</text></svg>
<svg class="s" width="1" height="1"><text transform="translate(207.50,105.85)" font-size="10.000" fill="#3c3c3c">4/4/2019</text></svg>
<svg class="s" width="1" height="1"><text transform="translate(453.82,105.85) scale(0.8360,1)" font-size="10.145" fill="#3c3c3c">ΕΟΠΥΥ</text></svg>
<svg class="s" width="1" height="1"><text transform="translate(670.45,105.85) scale(0.8900,1)" font-size="10.145" fill="#3c3c3c">ΣΟΠΡΑΝΟΥ ΒΑΣΙΛΙΚΗ</text></svg>
<div class="r" style="left:0px;top:129.55px;width:9.3px;height:1px;background:#dcdcdc"></div>
<div class="r" style="left:9.3px;top:129.55px;width:1684px;height:1px;background:#d8d8d8"></div>
<div class="r" style="left:9px;top:111.90px;width:1px;height:18.65px;background:#d8d8d8"></div>
<div class="r" style="left:77px;top:111.90px;width:1px;height:18.65px;background:#d8d8d8"></div>
<div class="r" style="left:205px;top:111.90px;width:1px;height:18.65px;background:#d8d8d8"></div>
<div class="r" style="left:322px;top:111.90px;width:1px;height:18.65px;background:#d8d8d8"></div>
<div class="r" style="left:452px;top:111.90px;width:1px;height:18.65px;background:#d8d8d8"></div>
<div class="r" style="left:669px;top:111.90px;width:1px;height:18.65px;background:#d8d8d8"></div>
<div class="r" style="left:36.2px;top:113.70px;width:13.8px;height:14.3px;border:1px solid #a4a4a4;border-bottom-color:#c8c8c8;box-sizing:border-box;background:#fff"></div>
<svg class="r" style="left:39.2px;top:117.30px" width="8" height="8" viewBox="0 0 8 8"><path d="M0.3 3.6 L2.6 6.3 L7.3 0.6" stroke="#3a3a3a" fill="none" stroke-width="1.05"/></svg>
<svg class="s" width="1" height="1"><text transform="translate(78.50,124.50) scale(0.9950,1)" font-size="10.000" fill="#3c3c3c">0021145</text></svg>
<svg class="s" width="1" height="1"><text transform="translate(207.50,124.50)" font-size="10.000" fill="#3c3c3c">4/4/2019</text></svg>
<svg class="s" width="1" height="1"><text transform="translate(453.62,124.50) scale(0.9630,1)" font-size="10.145" fill="#3c3c3c">ΙΔΙΩΤΗΣ</text></svg>
<svg class="s" width="1" height="1"><text transform="translate(670.45,124.50) scale(0.8900,1)" font-size="10.145" fill="#3c3c3c">ΣΛΟΥΚΑΣ ΠΑΝΤΕΛΗΣ</text></svg>
<div class="r" style="left:0px;top:148.20px;width:9.3px;height:1px;background:#dcdcdc"></div>
<div class="r" style="left:9.3px;top:148.20px;width:1684px;height:1px;background:#d8d8d8"></div>
<div class="r" style="left:9px;top:130.55px;width:1px;height:18.65px;background:#d8d8d8"></div>
<div class="r" style="left:77px;top:130.55px;width:1px;height:18.65px;background:#d8d8d8"></div>
<div class="r" style="left:205px;top:130.55px;width:1px;height:18.65px;background:#d8d8d8"></div>
<div class="r" style="left:322px;top:130.55px;width:1px;height:18.65px;background:#d8d8d8"></div>
<div class="r" style="left:452px;top:130.55px;width:1px;height:18.65px;background:#d8d8d8"></div>
<div class="r" style="left:669px;top:130.55px;width:1px;height:18.65px;background:#d8d8d8"></div>
<div class="r" style="left:36.2px;top:132.35px;width:13.8px;height:14.3px;border:1px solid #a4a4a4;border-bottom-color:#c8c8c8;box-sizing:border-box;background:#fff"></div>
<svg class="r" style="left:39.2px;top:135.95px" width="8" height="8" viewBox="0 0 8 8"><path d="M0.3 3.6 L2.6 6.3 L7.3 0.6" stroke="#3a3a3a" fill="none" stroke-width="1.05"/></svg>
<svg class="s" width="1" height="1"><text transform="translate(78.50,143.15) scale(0.9950,1)" font-size="10.000" fill="#3c3c3c">0021153</text></svg>
<svg class="s" width="1" height="1"><text transform="translate(207.50,143.15)" font-size="10.000" fill="#3c3c3c">4/4/2019</text></svg>
<svg class="s" width="1" height="1"><text transform="translate(453.82,143.15) scale(0.8360,1)" font-size="10.145" fill="#3c3c3c">ΕΟΠΥΥ</text></svg>
<svg class="s" width="1" height="1"><text transform="translate(670.45,143.15) scale(0.8900,1)" font-size="10.145" fill="#3c3c3c">ΣΑΚΕΛΛΑΡΙΟΥ ΔΗΜΗΤΡΑ</text></svg>
<div class="r" style="left:0px;top:166.85px;width:9.3px;height:1px;background:#dcdcdc"></div>
<div class="r" style="left:9.3px;top:166.85px;width:1684px;height:1px;background:#d8d8d8"></div>
<div class="r" style="left:9px;top:149.20px;width:1px;height:18.65px;background:#d8d8d8"></div>
<div class="r" style="left:77px;top:149.20px;width:1px;height:18.65px;background:#d8d8d8"></div>
<div class="r" style="left:205px;top:149.20px;width:1px;height:18.65px;background:#d8d8d8"></div>
<div class="r" style="left:322px;top:149.20px;width:1px;height:18.65px;background:#d8d8d8"></div>
<div class="r" style="left:452px;top:149.20px;width:1px;height:18.65px;background:#d8d8d8"></div>
<div class="r" style="left:669px;top:149.20px;width:1px;height:18.65px;background:#d8d8d8"></div>
<div class="r" style="left:36.2px;top:151.00px;width:13.8px;height:14.3px;border:1px solid #a4a4a4;border-bottom-color:#c8c8c8;box-sizing:border-box;background:#fff"></div>
<svg class="r" style="left:39.2px;top:154.60px" width="8" height="8" viewBox="0 0 8 8"><path d="M0.3 3.6 L2.6 6.3 L7.3 0.6" stroke="#3a3a3a" fill="none" stroke-width="1.05"/></svg>
<svg class="s" width="1" height="1"><text transform="translate(78.50,161.80) scale(0.9950,1)" font-size="10.000" fill="#3c3c3c">0021167</text></svg>
<svg class="s" width="1" height="1"><text transform="translate(207.20,161.80)" font-size="10.000" fill="#3c3c3c">26/7/2019</text></svg>
<svg class="s" width="1" height="1"><text transform="translate(453.82,161.80) scale(0.8360,1)" font-size="10.145" fill="#3c3c3c">ΕΟΠΥΥ</text></svg>
<svg class="s" width="1" height="1"><text transform="translate(670.18,161.80) scale(0.8900,1)" font-size="10.145" fill="#3c3c3c">ΠΑΠΠΑ ΜΙΛΕΝΑ</text></svg>
<div class="r" style="left:0px;top:185.50px;width:9.3px;height:1px;background:#dcdcdc"></div>
<div class="r" style="left:9.3px;top:185.50px;width:1684px;height:1px;background:#d8d8d8"></div>
<div class="r" style="left:9px;top:167.85px;width:1px;height:18.65px;background:#d8d8d8"></div>
<div class="r" style="left:77px;top:167.85px;width:1px;height:18.65px;background:#d8d8d8"></div>
<div class="r" style="left:205px;top:167.85px;width:1px;height:18.65px;background:#d8d8d8"></div>
<div class="r" style="left:322px;top:167.85px;width:1px;height:18.65px;background:#d8d8d8"></div>
<div class="r" style="left:452px;top:167.85px;width:1px;height:18.65px;background:#d8d8d8"></div>
<div class="r" style="left:669px;top:167.85px;width:1px;height:18.65px;background:#d8d8d8"></div>
<div class="r" style="left:36.2px;top:169.65px;width:13.8px;height:14.3px;border:1px solid #a4a4a4;border-bottom-color:#c8c8c8;box-sizing:border-box;background:#fff"></div>
<svg class="r" style="left:39.2px;top:173.25px" width="8" height="8" viewBox="0 0 8 8"><path d="M0.3 3.6 L2.6 6.3 L7.3 0.6" stroke="#3a3a3a" fill="none" stroke-width="1.05"/></svg>
<svg class="s" width="1" height="1"><text transform="translate(78.50,180.45) scale(0.9950,1)" font-size="10.000" fill="#3c3c3c">0021156</text></svg>
<svg class="s" width="1" height="1"><text transform="translate(207.30,180.45)" font-size="10.000" fill="#3c3c3c">5/4/2019</text></svg>
<svg class="s" width="1" height="1"><text transform="translate(453.82,180.45) scale(0.8360,1)" font-size="10.145" fill="#3c3c3c">ΕΟΠΥΥ</text></svg>
<svg class="s" width="1" height="1"><text transform="translate(670.18,180.45) scale(0.8900,1)" font-size="10.145" fill="#3c3c3c">ΝΙΚΟΛΑΟΥ ΝΙΚΟΛΑΟΣ</text></svg>
<div class="r" style="left:0px;top:204.15px;width:9.3px;height:1px;background:#dcdcdc"></div>
<div class="r" style="left:9.3px;top:204.15px;width:1684px;height:1px;background:#d8d8d8"></div>
<div class="r" style="left:9px;top:186.50px;width:1px;height:18.65px;background:#d8d8d8"></div>
<div class="r" style="left:77px;top:186.50px;width:1px;height:18.65px;background:#d8d8d8"></div>
<div class="r" style="left:205px;top:186.50px;width:1px;height:18.65px;background:#d8d8d8"></div>
<div class="r" style="left:322px;top:186.50px;width:1px;height:18.65px;background:#d8d8d8"></div>
<div class="r" style="left:452px;top:186.50px;width:1px;height:18.65px;background:#d8d8d8"></div>
<div class="r" style="left:669px;top:186.50px;width:1px;height:18.65px;background:#d8d8d8"></div>
<div class="r" style="left:36.2px;top:188.30px;width:13.8px;height:14.3px;border:1px solid #a4a4a4;border-bottom-color:#c8c8c8;box-sizing:border-box;background:#fff"></div>
<svg class="r" style="left:39.2px;top:191.90px" width="8" height="8" viewBox="0 0 8 8"><path d="M0.3 3.6 L2.6 6.3 L7.3 0.6" stroke="#3a3a3a" fill="none" stroke-width="1.05"/></svg>
<svg class="s" width="1" height="1"><text transform="translate(78.50,199.10) scale(0.9950,1)" font-size="10.000" fill="#3c3c3c">0021135</text></svg>
<svg class="s" width="1" height="1"><text transform="translate(207.50,199.10)" font-size="10.000" fill="#3c3c3c">4/4/2019</text></svg>
<svg class="s" width="1" height="1"><text transform="translate(453.82,199.10) scale(0.8360,1)" font-size="10.145" fill="#3c3c3c">ΕΟΠΥΥ</text></svg>
<svg class="s" width="1" height="1"><text transform="translate(670.18,199.10) scale(0.8900,1)" font-size="10.145" fill="#3c3c3c">ΜΩΥΣΗ ΧΑΡΙΚΛΕΙΑ</text></svg>
<div class="r" style="left:0px;top:222.80px;width:9.3px;height:1px;background:#dcdcdc"></div>
<div class="r" style="left:9.3px;top:222.80px;width:1684px;height:1px;background:#d8d8d8"></div>
<div class="r" style="left:9px;top:205.15px;width:1px;height:18.65px;background:#d8d8d8"></div>
<div class="r" style="left:77px;top:205.15px;width:1px;height:18.65px;background:#d8d8d8"></div>
<div class="r" style="left:205px;top:205.15px;width:1px;height:18.65px;background:#d8d8d8"></div>
<div class="r" style="left:322px;top:205.15px;width:1px;height:18.65px;background:#d8d8d8"></div>
<div class="r" style="left:452px;top:205.15px;width:1px;height:18.65px;background:#d8d8d8"></div>
<div class="r" style="left:669px;top:205.15px;width:1px;height:18.65px;background:#d8d8d8"></div>
<div class="r" style="left:36.2px;top:206.95px;width:13.8px;height:14.3px;border:1px solid #a4a4a4;border-bottom-color:#c8c8c8;box-sizing:border-box;background:#fff"></div>
<svg class="r" style="left:39.2px;top:210.55px" width="8" height="8" viewBox="0 0 8 8"><path d="M0.3 3.6 L2.6 6.3 L7.3 0.6" stroke="#3a3a3a" fill="none" stroke-width="1.05"/></svg>
<svg class="s" width="1" height="1"><text transform="translate(78.50,217.75) scale(0.9950,1)" font-size="10.000" fill="#3c3c3c">0021134</text></svg>
<svg class="s" width="1" height="1"><text transform="translate(207.50,217.75)" font-size="10.000" fill="#3c3c3c">4/4/2019</text></svg>
<svg class="s" width="1" height="1"><text transform="translate(453.62,217.75) scale(0.9630,1)" font-size="10.145" fill="#3c3c3c">ΙΔΙΩΤΗΣ</text></svg>
<svg class="s" width="1" height="1"><text transform="translate(670.18,217.75) scale(0.8900,1)" font-size="10.145" fill="#3c3c3c">ΜΠΟΚΑΚΗΣ ΜΩΥΣΗΣ</text></svg>
<div class="r" style="left:0px;top:241.45px;width:9.3px;height:1px;background:#dcdcdc"></div>
<div class="r" style="left:9.3px;top:241.45px;width:1684px;height:1px;background:#d8d8d8"></div>
<div class="r" style="left:9px;top:223.80px;width:1px;height:18.65px;background:#d8d8d8"></div>
<div class="r" style="left:77px;top:223.80px;width:1px;height:18.65px;background:#d8d8d8"></div>
<div class="r" style="left:205px;top:223.80px;width:1px;height:18.65px;background:#d8d8d8"></div>
<div class="r" style="left:322px;top:223.80px;width:1px;height:18.65px;background:#d8d8d8"></div>
<div class="r" style="left:452px;top:223.80px;width:1px;height:18.65px;background:#d8d8d8"></div>
<div class="r" style="left:669px;top:223.80px;width:1px;height:18.65px;background:#d8d8d8"></div>
<div class="r" style="left:36.2px;top:225.60px;width:13.8px;height:14.3px;border:1px solid #a4a4a4;border-bottom-color:#c8c8c8;box-sizing:border-box;background:#fff"></div>
<svg class="r" style="left:39.2px;top:229.20px" width="8" height="8" viewBox="0 0 8 8"><path d="M0.3 3.6 L2.6 6.3 L7.3 0.6" stroke="#3a3a3a" fill="none" stroke-width="1.05"/></svg>
<svg class="s" width="1" height="1"><text transform="translate(78.50,236.40) scale(0.9950,1)" font-size="10.000" fill="#3c3c3c">0021142</text></svg>
<svg class="s" width="1" height="1"><text transform="translate(207.50,236.40)" font-size="10.000" fill="#3c3c3c">4/4/2019</text></svg>
<svg class="s" width="1" height="1"><text transform="translate(453.82,236.40) scale(0.8360,1)" font-size="10.145" fill="#3c3c3c">ΕΟΠΥΥ</text></svg>
<svg class="s" width="1" height="1"><text transform="translate(670.18,236.40) scale(0.8900,1)" font-size="10.145" fill="#3c3c3c">ΜΠΕΣΑΚΟΣ ΝΙΚΟΛΑΟΣ</text></svg>
<div class="r" style="left:0px;top:260.10px;width:9.3px;height:1px;background:#dcdcdc"></div>
<div class="r" style="left:9.3px;top:260.10px;width:1684px;height:1px;background:#d8d8d8"></div>
<div class="r" style="left:9px;top:242.45px;width:1px;height:18.65px;background:#d8d8d8"></div>
<div class="r" style="left:77px;top:242.45px;width:1px;height:18.65px;background:#d8d8d8"></div>
<div class="r" style="left:205px;top:242.45px;width:1px;height:18.65px;background:#d8d8d8"></div>
<div class="r" style="left:322px;top:242.45px;width:1px;height:18.65px;background:#d8d8d8"></div>
<div class="r" style="left:452px;top:242.45px;width:1px;height:18.65px;background:#d8d8d8"></div>
<div class="r" style="left:669px;top:242.45px;width:1px;height:18.65px;background:#d8d8d8"></div>
<div class="r" style="left:36.2px;top:244.25px;width:13.8px;height:14.3px;border:1px solid #a4a4a4;border-bottom-color:#c8c8c8;box-sizing:border-box;background:#fff"></div>
<svg class="r" style="left:39.2px;top:247.85px" width="8" height="8" viewBox="0 0 8 8"><path d="M0.3 3.6 L2.6 6.3 L7.3 0.6" stroke="#3a3a3a" fill="none" stroke-width="1.05"/></svg>
<svg class="s" width="1" height="1"><text transform="translate(78.50,255.05) scale(0.9950,1)" font-size="10.000" fill="#3c3c3c">0021132</text></svg>
<svg class="s" width="1" height="1"><text transform="translate(207.50,255.05)" font-size="10.000" fill="#3c3c3c">4/4/2019</text></svg>
<svg class="s" width="1" height="1"><text transform="translate(453.82,255.05) scale(0.8360,1)" font-size="10.145" fill="#3c3c3c">ΕΟΠΥΥ</text></svg>
<svg class="s" width="1" height="1"><text transform="translate(670.18,255.05) scale(0.8900,1)" font-size="10.145" fill="#3c3c3c">ΜΟΥΚΚΑΣ ΝΙΚΟΛΑΟΣ</text></svg>
<div class="r" style="left:0px;top:278.75px;width:9.3px;height:1px;background:#dcdcdc"></div>
<div class="r" style="left:9.3px;top:278.75px;width:1684px;height:1px;background:#d8d8d8"></div>
<div class="r" style="left:9px;top:261.10px;width:1px;height:18.65px;background:#d8d8d8"></div>
<div class="r" style="left:77px;top:261.10px;width:1px;height:18.65px;background:#d8d8d8"></div>
<div class="r" style="left:205px;top:261.10px;width:1px;height:18.65px;background:#d8d8d8"></div>
<div class="r" style="left:322px;top:261.10px;width:1px;height:18.65px;background:#d8d8d8"></div>
<div class="r" style="left:452px;top:261.10px;width:1px;height:18.65px;background:#d8d8d8"></div>
<div class="r" style="left:669px;top:261.10px;width:1px;height:18.65px;background:#d8d8d8"></div>
<div class="r" style="left:36.2px;top:262.90px;width:13.8px;height:14.3px;border:1px solid #a4a4a4;border-bottom-color:#c8c8c8;box-sizing:border-box;background:#fff"></div>
<svg class="r" style="left:39.2px;top:266.50px" width="8" height="8" viewBox="0 0 8 8"><path d="M0.3 3.6 L2.6 6.3 L7.3 0.6" stroke="#3a3a3a" fill="none" stroke-width="1.05"/></svg>
<svg class="s" width="1" height="1"><text transform="translate(78.50,273.70) scale(0.9950,1)" font-size="10.000" fill="#3c3c3c">0021139</text></svg>
<svg class="s" width="1" height="1"><text transform="translate(207.50,273.70)" font-size="10.000" fill="#3c3c3c">4/4/2019</text></svg>
<svg class="s" width="1" height="1"><text transform="translate(453.82,273.70) scale(0.8360,1)" font-size="10.145" fill="#3c3c3c">ΕΟΠΥΥ</text></svg>
<svg class="s" width="1" height="1"><text transform="translate(670.18,273.70) scale(0.8900,1)" font-size="10.145" fill="#3c3c3c">ΜΟΣΧΟΥΛΗΣ ΜΩΥΣΗΣ</text></svg>
<div class="r" style="left:0px;top:297.40px;width:9.3px;height:1px;background:#dcdcdc"></div>
<div class="r" style="left:9.3px;top:297.40px;width:1684px;height:1px;background:#d8d8d8"></div>
<div class="r" style="left:9px;top:279.75px;width:1px;height:18.65px;background:#d8d8d8"></div>
<div class="r" style="left:77px;top:279.75px;width:1px;height:18.65px;background:#d8d8d8"></div>
<div class="r" style="left:205px;top:279.75px;width:1px;height:18.65px;background:#d8d8d8"></div>
<div class="r" style="left:322px;top:279.75px;width:1px;height:18.65px;background:#d8d8d8"></div>
<div class="r" style="left:452px;top:279.75px;width:1px;height:18.65px;background:#d8d8d8"></div>
<div class="r" style="left:669px;top:279.75px;width:1px;height:18.65px;background:#d8d8d8"></div>
<div class="r" style="left:36.2px;top:281.55px;width:13.8px;height:14.3px;border:1px solid #a4a4a4;border-bottom-color:#c8c8c8;box-sizing:border-box;background:#fff"></div>
<svg class="r" style="left:39.2px;top:285.15px" width="8" height="8" viewBox="0 0 8 8"><path d="M0.3 3.6 L2.6 6.3 L7.3 0.6" stroke="#3a3a3a" fill="none" stroke-width="1.05"/></svg>
<svg class="s" width="1" height="1"><text transform="translate(78.50,292.35) scale(0.9950,1)" font-size="10.000" fill="#3c3c3c">0021172</text></svg>
<svg class="s" width="1" height="1"><text transform="translate(206.90,292.35)" font-size="10.000" fill="#3c3c3c">1/10/2019</text></svg>
<svg class="s" width="1" height="1"><text transform="translate(670.18,292.35) scale(0.8900,1)" font-size="10.145" fill="#3c3c3c">ΜΗΤΣΙΑΚΟΥ ΕΛΕΝΗ</text></svg>
</div>
<div class="r" style="left:12.5px;top:822px;width:1684px;height:1px;background:#d8d8d8"></div>
<div class="r" style="left:670px;top:824.7px;width:1px;height:26.3px;background:#d8d8d8"></div>
<svg class="s" width="1" height="1"><text transform="translate(462.10,842.00) scale(0.9954,1)" font-size="10.290" fill="#3c3c3c">Total: 38</text></svg>
<div class="r" style="left:1522px;top:863px;width:173.5px;height:25.2px;background:#fff;border:1px solid #bdbdbd;box-sizing:border-box"></div>
<svg class="s" width="1" height="1"><text transform="translate(1589.86,879.40) scale(0.8617,1)" font-size="10.725" fill="#3c3c3c">Κλείσιμο</text></svg>
<div class="r" style="left:13.5px;top:233px;width:611px;height:134.5px;border:3px solid #ed1c24;box-sizing:border-box"></div>
<div class="r" style="left:632px;top:236.4px;width:113px;height:127.5px;border:3px solid #ed1c24;box-sizing:border-box"></div>
<div class="r" style="left:1594.8px;top:234.8px;width:89.4px;height:136.2px;border:3px solid #ed1c24;box-sizing:border-box"></div>
<div class="r" style="left:13.2px;top:567.3px;width:1683px;height:17.3px;border:3px solid #ed1c24;box-sizing:border-box"></div>
<div class="badge" style="left:8.15px;top:209.05px;width:30.5px;height:30.5px"></div>
<svg class="s" width="1" height="1"><path d="M23.50 217.90 H25.30 V228.90 H22.90 V221.70 C22.10 222.40 21.10 222.80 20.00 223.10 V220.90 C21.60 220.40 22.90 219.30 23.50 217.90Z" fill="#fff"/></svg>
<div class="badge" style="left:87.35px;top:301.05px;width:30.5px;height:30.5px"></div>
<svg class="s" width="1" height="1"><text transform="translate(98.61,320.90)" font-size="15.600" fill="#fff" font-weight="bold">2</text></svg>
<div class="badge" style="left:246.05px;top:301.95px;width:30.5px;height:30.5px"></div>
<svg class="s" width="1" height="1"><text transform="translate(257.39,321.80)" font-size="15.600" fill="#fff" font-weight="bold">3</text></svg>
<div class="badge" style="left:733.45px;top:211.75px;width:30.5px;height:30.5px"></div>
<svg class="s" width="1" height="1"><text transform="translate(744.63,231.60)" font-size="15.600" fill="#fff" font-weight="bold">4</text></svg>
<div class="badge" style="left:5.15px;top:540.35px;width:30.5px;height:30.5px"></div>
<svg class="s" width="1" height="1"><text transform="translate(16.33,560.20)" font-size="15.600" fill="#fff" font-weight="bold">5</text></svg>
<div class="badge" style="left:1583.05px;top:213.95px;width:30.5px;height:30.5px"></div>
<svg class="s" width="1" height="1"><text transform="translate(1594.23,233.80)" font-size="15.600" fill="#fff" font-weight="bold">6</text></svg>
<div class="r" style="left:101px;top:111px;width:185.5px;height:45.5px;background:#fff;border:1px solid #c6c6c6;box-sizing:border-box;box-shadow:2px 2px 3px rgba(0,0,0,0.25)"></div>
<div class="r" style="left:103px;top:114px;width:182px;height:20px;background:#cdcdcd"></div>
<svg class="s" width="1" height="1"><text transform="translate(131.63,128.00) scale(1.0178,1)" font-size="10.725" fill="#5a5a5a">Μαζική Τιμολόγηση</text></svg>
<svg class="s" width="1" height="1"><text transform="translate(132.18,148.60) scale(1.0221,1)" font-size="10.725" fill="#555">Τιμολόγηση Περιστατικού</text></svg>
<svg class="s" width="1" height="1"><path d="M257.3 121.2 L257.3 137.4 L261 133.9 L263.7 139.7 L266.5 138.5 L263.9 132.9 L268.6 132.9Z" fill="#fff" stroke="#111" stroke-width="1.1" stroke-linejoin="round"/></svg>
<div class="r" style="left:270px;top:143px;width:102px;height:22px;background:linear-gradient(#ffffff,#e4e5f0);border:1px solid #767676;border-radius:2px;box-sizing:border-box;box-shadow:2px 2px 2px rgba(0,0,0,0.3)"></div>
<svg class="s" width="1" height="1"><text transform="translate(273.82,158.60) scale(0.9835,1)" font-size="11.159" fill="#1a1a1a">Μαζική Τιμολόγηση</text></svg>
</body></html>
